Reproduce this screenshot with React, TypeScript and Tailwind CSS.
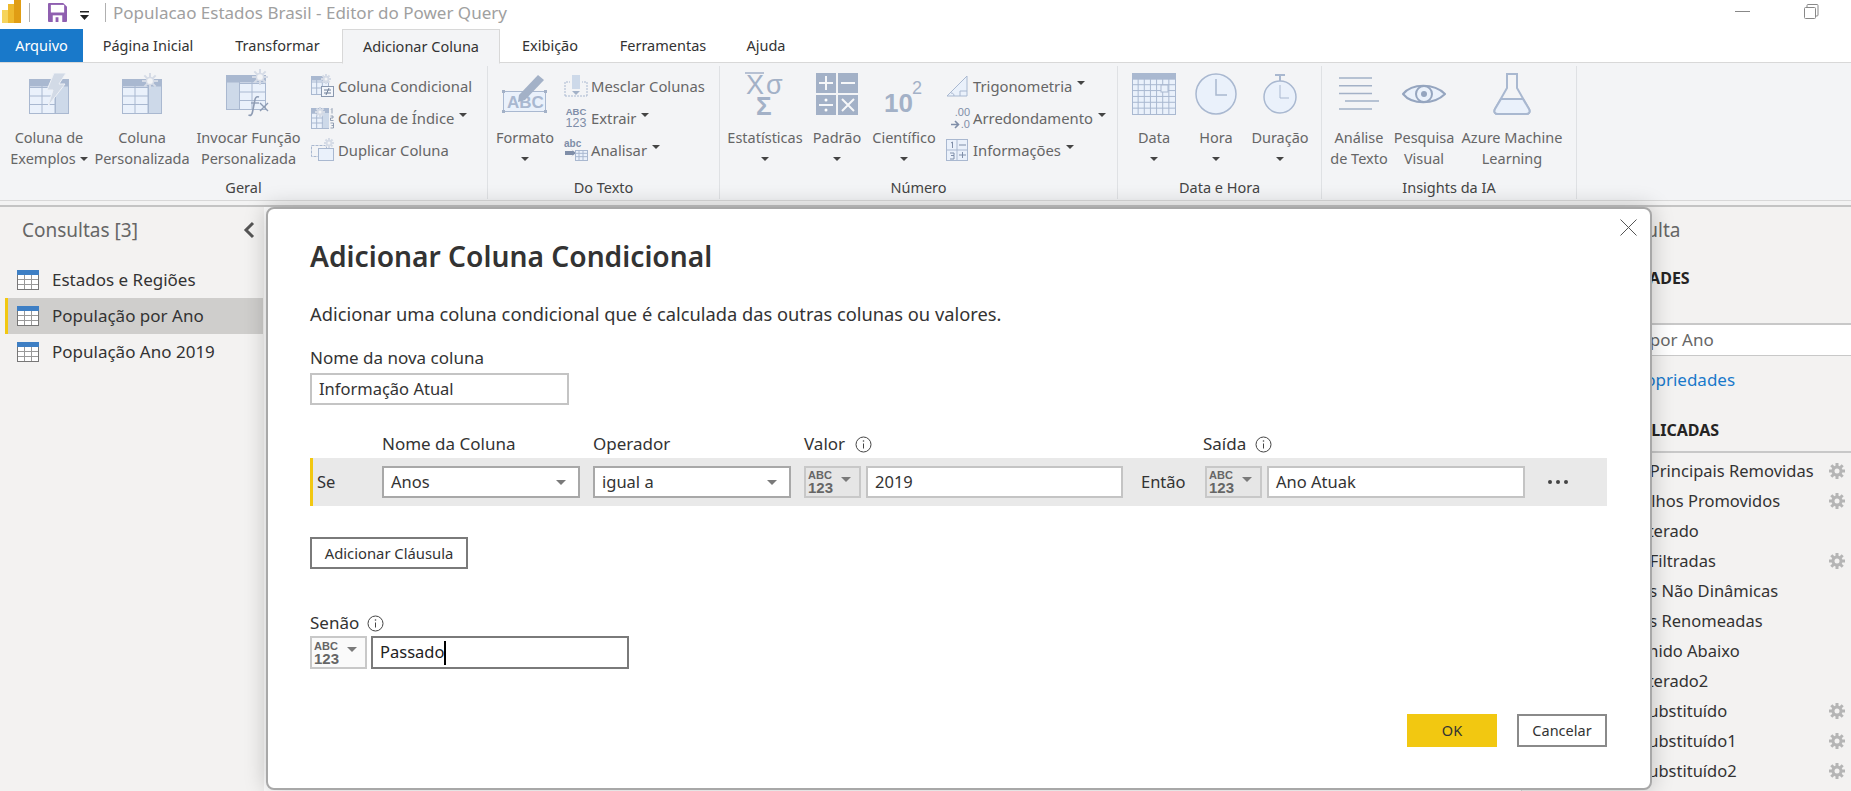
import React from "react";

const HDR = "#a9b8d0";
const MID = "#cdd9e9";
const LITE = "#eaf1fb";
const LINE = "#a9b8d0";
const SUN = "#d5dbe6";

function Grid({ x, y, w, h, cols, rows, fill = LITE }: { x: number; y: number; w: number; h: number; cols: number; rows: number; fill?: string }) {
  const ls = [];
  for (let i = 1; i < cols; i++) ls.push(<line key={"c" + i} x1={x + (w * i) / cols} x2={x + (w * i) / cols} y1={y} y2={y + h} stroke={LINE} />);
  for (let i = 1; i < rows; i++) ls.push(<line key={"r" + i} x1={x} x2={x + w} y1={y + (h * i) / rows} y2={y + (h * i) / rows} stroke={LINE} />);
  return (
    <g>
      <rect x={x + 0.5} y={y + 0.5} width={w} height={h} fill={fill} stroke={LINE} />
      {ls}
    </g>
  );
}

function Sun({ cx, cy, r }: { cx: number; cy: number; r: number }) {
  const rays = [0, 45, 90, 135].map((a) => {
    const t = (a * Math.PI) / 180;
    return <line key={a} x1={cx - r * Math.cos(t)} y1={cy - r * Math.sin(t)} x2={cx + r * Math.cos(t)} y2={cy + r * Math.sin(t)} stroke={SUN} strokeWidth={2} />;
  });
  return (
    <g>
      {rays}
      <circle cx={cx} cy={cy} r={r * 0.45} fill="#f3f4f6" stroke={SUN} strokeWidth={1.5} />
    </g>
  );
}

function IconExamples() {
  return (
    <svg width="41" height="42" viewBox="0 0 41 42">
      <Grid x={0} y={6} w={39} h={34} cols={3} rows={4} />
      <rect x={26.5} y={6.5} width={13} height={34} fill={MID} stroke={LINE} />
      <rect x={0.5} y={6.5} width={39} height={7} fill={HDR} />
      <path d="M25 0h12l-7 11h6L19 33l5-16h-6z" fill="#d2dae6" stroke="#eef1f6" />
    </svg>
  );
}
function IconCustom() {
  return (
    <svg width="41" height="42" viewBox="0 0 41 42">
      <Grid x={0} y={6} w={39} h={34} cols={3} rows={4} />
      <rect x={26.5} y={6.5} width={13} height={34} fill={MID} stroke={LINE} />
      <rect x={0.5} y={6.5} width={39} height={7} fill={HDR} />
      <Sun cx={28} cy={8} r={8} />
    </svg>
  );
}
function IconInvoke() {
  return (
    <svg width="46" height="49" viewBox="0 0 46 49">
      <Grid x={0} y={6} w={39} h={34} cols={3} rows={4} />
      <rect x={0.5} y={6.5} width={13} height={34} fill={MID} stroke={LINE} />
      <rect x={0.5} y={6.5} width={39} height={7} fill={HDR} />
      <Sun cx={34} cy={8} r={8} />
      <path d="M33 28c-3-1-4 1-4.500 5l-2 10c-.5 3-2 4-4 3" fill="none" stroke="#8d9bb3" strokeWidth={1.6} />
      <line x1={25} y1={34} x2={33} y2={34} stroke="#8d9bb3" strokeWidth={1.3} />
      <path d="M34 34l8 8M42 34l-8 8" stroke="#8d9bb3" strokeWidth={1.4} />
    </svg>
  );
}
function SmallCond() {
  return (
    <svg width="24" height="24" viewBox="0 0 24 24">
      <Grid x={0} y={2} w={17} h={18} cols={3} rows={3} />
      <rect x={0.5} y={2.5} width={17} height={4} fill={HDR} />
      <Sun cx={15} cy={5} r={5} />
      <rect x={10.5} y={12.5} width={12} height={10} fill="#f3f6fb" stroke="#8997ae" />
      <path d="M13 16h7M13 19h7M18 14l-3 7" stroke="#6f7f98" fill="none" />
    </svg>
  );
}
function SmallIndex() {
  return (
    <svg width="24" height="24" viewBox="0 0 24 24">
      <Grid x={0} y={2} w={17} h={20} cols={3} rows={4} />
      <rect x={0.5} y={2.5} width={17} height={5} fill={HDR} />
      <rect x={12} y={7} width={6} height={15} fill={MID} />
      <Sun cx={9} cy={6} r={5} />
      <path d="M20 3.500l1-1v5M19.500 10h2.500v2h-2.500v2.500h3M19.500 17h3v5h-3M20.500 19.500h2" fill="none" stroke="#7a8aa3" strokeWidth={0.8} />
    </svg>
  );
}
function SmallDup() {
  return (
    <svg width="24" height="24" viewBox="0 0 24 24">
      <rect x={0.5} y={7.5} width={15} height={11} fill="none" stroke={LINE} strokeDasharray="3 1" />
      <rect x={7.5} y={10.5} width={15} height={12} fill={LITE} stroke={LINE} />
      <Sun cx={18} cy={5} r={5} />
    </svg>
  );
}
function IconFormat() {
  return (
    <svg width="46" height="40" viewBox="0 0 46 40">
      <rect x={1.5} y={17.5} width={42} height={20} fill={LITE} stroke={LINE} />
      {[[0, 16], [42, 16], [0, 36], [42, 36]].map(([x, y]) => (
        <rect key={x + "-" + y} x={x} y={y} width={3} height={3} fill="#a3b1c7" />
      ))}
      <text x={5} y={34} fontSize="17" fontWeight={700} fill={HDR} fontFamily="Liberation Sans">ABC</text>
      <path d="M17 21L36 1l6 5-19 20-7 2z" fill="#a3b1c7" />
    </svg>
  );
}
function SmallMerge() {
  return (
    <svg width="24" height="24" viewBox="0 0 24 24">
      <path d="M1 22V8h5M23 22V8h-5M1 22h22" fill="none" stroke={LINE} strokeDasharray="2 1" />
      <rect x={8} y={1} width={8} height={14} fill={MID} />
      <path d="M8 17l4 4 4-4z" fill="#a3b1c7" />
    </svg>
  );
}
function SmallExtract() {
  return (
    <div className="w-[24px] h-[24px] flex flex-col items-center text-[#7f8ea8] font-['Liberation_Sans']">
      <span className="text-[9.5px] leading-[11px] font-bold">ABC</span>
      <span className="text-[12.5px] leading-[13px]">123</span>
    </div>
  );
}
function SmallParse() {
  return (
    <div className="relative w-[24px] h-[24px] text-[#7f8ea8] font-['Liberation_Sans']">
      <span className="block text-[10px] leading-[11px] font-bold">abc</span>
      <svg width="24" height="13" viewBox="0 0 24 13" className="block">
        <path d="M1 2h8l-2-2 5 4-5 4 2-2H1z" fill="#7f8ea8" />
        <Grid x={11} y={1} w={12} h={10} cols={3} rows={3} />
      </svg>
    </div>
  );
}
function IconStats() {
  return (
    <svg width="40" height="54" viewBox="0 -6 40 54">
      <text x={1} y={21} fontSize="27" fill="#a3b1c7" fontFamily="Liberation Sans">X</text>
      <text x={21} y={21} fontSize="27" fill="#a3b1c7" fontFamily="Liberation Sans">σ</text>
      <line x1={0} x2={19} y1={0} y2={0} stroke="#a3b1c7" strokeWidth={1.5} />
      <text x={11} y={42} fontSize="26" fontWeight={700} fill="#a3b1c7" fontFamily="Liberation Sans">Σ</text>
    </svg>
  );
}
function IconCalc() {
  return (
    <svg width="42" height="42" viewBox="0 0 42 42">
      <rect x={0} y={0} width={20} height={20} fill="#a3b1c7" />
      <rect x={22} y={0} width={20} height={20} fill="#a3b1c7" />
      <rect x={0} y={22} width={20} height={20} fill="#a3b1c7" />
      <rect x={22} y={22} width={20} height={20} fill="#a3b1c7" />
      <path d="M3 10h14M10 3v14M25 10h14M3 32h14M26 26l12 12M38 26L26 38" stroke="#fff" strokeWidth={2} opacity={0.9} />
      <circle cx={10} cy={27} r={1.5} fill="#fff" />
      <circle cx={10} cy={37} r={1.5} fill="#fff" />
    </svg>
  );
}
function IconSci() {
  return (
    <svg width="40" height="46" viewBox="0 -8 40 46">
      <text x={0} y={33} fontSize="26" fontWeight={700} fill="#a3b1c7" fontFamily="Liberation Sans">10</text>
      <text x={28} y={15} fontSize="18" fontWeight={400} fill="#a3b1c7" fontFamily="Liberation Sans">2</text>
    </svg>
  );
}
function SmallTrig() {
  return (
    <svg width="24" height="24" viewBox="0 0 24 24">
      <path d="M1 22L21 2v20z" fill={LITE} stroke={LINE} />
      <path d="M14 22v-5h7M8 22c0-2-1-3-3-3" fill="none" stroke={LINE} />
    </svg>
  );
}
function SmallRound() {
  return (
    <div className="w-[24px] h-[24px] flex flex-col items-end text-[#7f8ea8] font-['Liberation_Sans'] text-[11px] relative">
      <span className="leading-[12px]">.00</span>
      <span className="leading-[12px] flex items-center gap-[1px]">
        <svg width="9" height="9" viewBox="0 0 9 9">
          <path d="M0 4.500h7M4 1l3.500 3.500L4 8" fill="none" stroke="#7f8ea8" strokeWidth={1.6} />
        </svg>
        .0
      </span>
    </div>
  );
}
function SmallInfo() {
  return (
    <svg width="24" height="24" viewBox="0 0 24 24">
      <rect x={0.5} y={1.5} width={21} height={21} fill={LITE} stroke={LINE} />
      <path d="M11 2v20M1 12h20" stroke={LINE} />
      <path d="M5 5l1.500-1v6M4 15h4v2.500H5M8 17.500V21H4" fill="none" stroke="#7f8ea8" />
      <path d="M13 7h7M13 17h7M16.500 14v6" stroke="#7f8ea8" />
    </svg>
  );
}
function IconCal() {
  return (
    <svg width="44" height="42" viewBox="0 0 44 42">
      <Grid x={0} y={0} w={43} h={41} cols={7} rows={7} />
      <rect x={0.5} y={0.5} width={43} height={6} fill={HDR} />
      <rect x={29} y={12} width={7} height={7} fill={LITE} stroke={HDR} />
    </svg>
  );
}
function IconClock() {
  return (
    <svg width="42" height="42" viewBox="0 0 42 42">
      <circle cx={21} cy={21} r={20} fill={LITE} stroke={LINE} strokeWidth={1.5} />
      <path d="M21 6v16h11" fill="none" stroke={LINE} strokeWidth={1.5} />
    </svg>
  );
}
function IconTimer() {
  return (
    <svg width="34" height="40" viewBox="0 0 34 40">
      <path d="M12 1h10M17 1v6" stroke={LINE} strokeWidth={2} />
      <circle cx={17} cy={23} r={16} fill={LITE} stroke={LINE} strokeWidth={1.5} />
      <path d="M17 11v13h9" fill="none" stroke={LINE} />
    </svg>
  );
}
function IconText() {
  return (
    <svg width="40" height="33" viewBox="0 0 40 33">
      <path d="M0 1h33M0 8.700h33M0 16.400h33M6 24.100h34M0 32h33" stroke="#a3b1c7" strokeWidth={1.5} />
    </svg>
  );
}
function IconEye() {
  return (
    <svg width="44" height="26" viewBox="0 0 44 26">
      <path d="M1 13C10 2 32 2 43 13 32 24 10 24 1 13z" fill={LITE} stroke="#95a5bf" strokeWidth={2} />
      <circle cx={22} cy={13} r={8} fill={LITE} stroke="#95a5bf" strokeWidth={2} />
      <circle cx={22} cy={13} r={3} fill="#95a5bf" />
    </svg>
  );
}
function IconFlask() {
  return (
    <svg width="38" height="42" viewBox="0 0 38 42">
      <path d="M14 1h10v14l12 21c1.500 3 0 5-3 5H5c-3 0-4.500-2-3-5l12-21z" fill="#f3f4f6" stroke={LINE} strokeWidth={2} />
      <path d="M8 26h22l6 10c1.500 3 0 5-3 5H5c-3 0-4.500-2-3-5z" fill={LITE} stroke={LINE} strokeWidth={2} />
    </svg>
  );
}

function Caret({ className = "" }: { className?: string }) {
  return <span className={"inline-block w-0 h-0 border-l-[4px] border-r-[4px] border-t-[4px] border-l-transparent border-r-transparent border-t-[#444444] " + className} />;
}

function BigBtn({ w, icon, lines, caret, inline }: { w: string; icon: React.ReactNode; lines: string[]; caret?: boolean; inline?: boolean }) {
  return (
    <div className={"flex flex-col items-center shrink-0 " + w}>
      <div className="h-[61px] pb-[6px] flex items-center justify-center">{icon}</div>
      {lines.map((l, i) => (
        <div key={l} className="h-[21px] leading-[21px] whitespace-nowrap">
          {l}
          {inline && i === lines.length - 1 ? <Caret className="ml-1 mb-[3px]" /> : null}
        </div>
      ))}
      {caret ? (
        <div className="h-[21px] flex items-center">
          <Caret />
        </div>
      ) : null}
    </div>
  );
}

function SmallBtn({ icon, label, caret }: { icon: React.ReactNode; label: string; caret?: boolean }) {
  return (
    <div className="h-[32px] flex items-center gap-[3px] whitespace-nowrap text-[14.8px]">
      <span className="w-[24px] h-[24px] flex items-center justify-center">{icon}</span>
      <span>{label}</span>
      {caret ? <Caret className="ml-[2px] mb-[6px]" /> : null}
    </div>
  );
}

function Group({ w, label, children }: { w: string; label: string; children: React.ReactNode }) {
  return (
    <div className={"flex flex-col shrink-0 h-[133px] mt-[3px] border-r border-[#dfe1e4] " + w}>
      <div className="flex h-[110px]">{children}</div>
      <div className="text-center text-[#444444] h-[23px] leading-[22px]">{label}</div>
    </div>
  );
}

function TableIcon() {
  return (
    <svg width="22" height="20" viewBox="0 0 22 20" className="shrink-0">
      <rect x={0.5} y={1.5} width={21} height={18} fill="#fff" stroke="#777" />
      <path d="M7.500 5v14M14.500 5v14M1 9.500h20M1 14.500h20" stroke="#999" />
      <rect x={0} y={0} width={22} height={5} fill="#3e7fc4" />
    </svg>
  );
}

function Gear() {
  return (
    <svg width="16" height="16" viewBox="0 0 16 16">
      <g stroke="#b5b5b5" strokeWidth={3}>
        <path d="M8 0v16M0 8h16M2.300 2.300l11.400 11.400M13.700 2.300L2.300 13.700" />
      </g>
      <circle cx={8} cy={8} r={5.5} fill="#b5b5b5" />
      <circle cx={8} cy={8} r={2.5} fill="#f3f2f1" />
    </svg>
  );
}

function Info() {
  return (
    <svg width="17" height="17" viewBox="0 0 17 17" className="shrink-0">
      <circle cx={8.5} cy={8.5} r={7.5} fill="none" stroke="#444" />
      <path d="M8.500 7.500v5" stroke="#444" />
      <circle cx={8.5} cy={5} r={0.8} fill="#444" />
    </svg>
  );
}

function TypePicker({ light }: { light?: boolean }) {
  return (
    <div className={"w-[57px] shrink-0 border-2 border-[#c8c8c8] flex items-center gap-[8px] pl-[2px] " + (light ? "h-[33px] bg-[#fafafa]" : "h-[32px] bg-[#e6e6e6]")}>
      <div className="flex flex-col text-[#666666] font-bold leading-none font-['Liberation_Sans']">
        <span className="text-[11px] leading-[11px]">ABC</span>
        <span className="text-[15px] leading-[13px]">123</span>
      </div>
      <span className="w-0 h-0 border-l-[5px] border-r-[5px] border-t-[5px] border-l-transparent border-r-transparent border-t-[#7a7a7a] mb-[6px]" />
    </div>
  );
}

function Sel({ text, w }: { text: string; w: string }) {
  return (
    <div className={"h-[32px] border-2 border-[#a8a8a8] bg-white flex items-center justify-between pl-[7px] pr-[12px] shrink-0 " + w}>
      <span>{text}</span>
      <span className="w-0 h-0 border-l-[5px] border-r-[5px] border-t-[5px] border-l-transparent border-r-transparent border-t-[#7a7a7a]" />
    </div>
  );
}

function Inp({ text, w, dark, caret }: { text: string; w: string; dark?: boolean; caret?: boolean }) {
  return (
    <div className={"border-2 bg-white flex items-center pl-[7px] shrink-0 " + w + " " + (dark ? "h-[33px] border-[#7a7a7a] text-[#222222]" : "h-[32px] border-[#c4c4c4]")}>
      <span>{text}</span>
      {caret ? <span className="w-[1.5px] h-[24px] bg-black" /> : null}
    </div>
  );
}

const steps: [string, boolean][] = [
  ["Linhas Principais Removidas", true],
  ["Cabeçalhos Promovidos", true],
  ["Tipo Alterado", false],
  ["Linhas Filtradas", true],
  ["Colunas Não Dinâmicas", false],
  ["Colunas Renomeadas", false],
  ["Preenchido Abaixo", false],
  ["Tipo Alterado2", false],
  ["Valor Substituído", true],
  ["Valor Substituído1", true],
  ["Valor Substituído2", true],
];

export default function App() {
  const tabs = ["Página Inicial", "Transformar"];
  return (
    <div className="relative w-[1851px] h-[791px] overflow-hidden bg-white text-[#333333] font-['Noto_Sans','Open_Sans',sans-serif] text-[14px]">
      {/* title bar */}
      <div className="h-[29px] flex items-start relative">
        <svg width="20" height="23" viewBox="0 0 20 23" className="ml-[2px]">
          <rect x={0} y={10} width={6} height={13} fill="#f6d45c" />
          <rect x={6} y={4} width={6} height={19} fill="#eeb92d" />
          <rect x={12} y={0} width={7} height={23} fill="#e09d14" />
        </svg>
        <span className="w-px h-[19px] bg-[#b0b0b0] ml-[7px] mt-[3px]" />
        <svg width="19" height="19" viewBox="0 0 20 20" className="ml-[18px] mt-[3px]">
          <path d="M1 0h15l4 4v15a1 1 0 0 1-1 1H1a1 1 0 0 1-1-1V1a1 1 0 0 1 1-1z" fill="#8f5fb0" />
          <rect x={3} y={2} width={14} height={8} fill="#fff" />
          <rect x={5} y={13} width={10} height={7} fill="#fff" />
          <rect x={8} y={15} width={3} height={5} fill="#8f5fb0" />
        </svg>
        <svg width="10" height="9" viewBox="0 0 10 9" className="ml-[13px] mt-[11px]">
          <rect x={0} y={0} width={9} height={1.5} fill="#222" />
          <path d="M0 4h9L4.500 9z" fill="#222" />
        </svg>
        <span className="w-px h-[19px] bg-[#b0b0b0] ml-[15px] mt-[3px]" />
        <span className="ml-[7px] text-[#a0a0a0] text-[17px] leading-[26px] whitespace-nowrap">Populacao Estados Brasil - Editor do Power Query</span>
        <span className="absolute left-[1735px] top-[11px] w-[15px] h-px bg-[#888]" />
        <svg width="15" height="15" viewBox="0 0 15 15" className="absolute left-[1804px] top-[4px]">
          <rect x={0.5} y={3.5} width={11} height={11} fill="none" stroke="#888" rx={1} />
          <path d="M3 3V1.500a1 1 0 0 1 1-1h9a1 1 0 0 1 1 1V11a1 1 0 0 1-1 1h-1" fill="none" stroke="#888" />
        </svg>
      </div>

      {/* tabs */}
      <div className="h-[34px] flex items-stretch text-[14.5px] text-[#333333] border-b border-[#d8d8d8]">
        <div className="w-[83px] bg-[#1979ca] text-white flex items-center justify-center">Arquivo</div>
        {tabs.map((t, i) => (
          <div key={t} className={"flex items-center justify-center " + (i === 0 ? "w-[130px]" : "w-[129px]")}>{t}</div>
        ))}
        <div className="w-[158px] bg-[#f3f4f6] border border-[#d8d8d8] border-b-[#f3f4f6] flex items-center justify-center h-[35px]">Adicionar Coluna</div>
        <div className="w-[100px] flex items-center justify-center">Exibição</div>
        <div className="w-[126px] flex items-center justify-center">Ferramentas</div>
        <div className="w-[80px] flex items-center justify-center">Ajuda</div>
      </div>

      {/* ribbon */}
      <div className="h-[138px] bg-[#f3f4f6] flex text-[14.5px] text-[#666666] border-b border-[#d8d8d8]">
        <Group w="w-[488px]" label="Geral">
          <BigBtn w="w-[98px]" icon={<IconExamples />} lines={["Coluna de", "Exemplos"]} inline />
          <BigBtn w="w-[88px]" icon={<IconCustom />} lines={["Coluna", "Personalizada"]} />
          <BigBtn w="w-[125px]" icon={<IconInvoke />} lines={["Invocar Função", "Personalizada"]} />
          <div className="flex flex-col pt-[4px]">
            <SmallBtn icon={<SmallCond />} label="Coluna Condicional" />
            <SmallBtn icon={<SmallIndex />} label="Coluna de Índice" caret />
            <SmallBtn icon={<SmallDup />} label="Duplicar Coluna" />
          </div>
        </Group>
        <Group w="w-[232px]" label="Do Texto">
          <BigBtn w="w-[74px]" icon={<IconFormat />} lines={["Formato"]} caret />
          <div className="flex flex-col pt-[4px] ml-[2px]">
            <SmallBtn icon={<SmallMerge />} label="Mesclar Colunas" />
            <SmallBtn icon={<SmallExtract />} label="Extrair" caret />
            <SmallBtn icon={<SmallParse />} label="Analisar" caret />
          </div>
        </Group>
        <Group w="w-[398px]" label="Número">
          <BigBtn w="w-[90px]" icon={<IconStats />} lines={["Estatísticas"]} caret />
          <BigBtn w="w-[54px]" icon={<IconCalc />} lines={["Padrão"]} caret />
          <BigBtn w="w-[80px]" icon={<IconSci />} lines={["Científico"]} caret />
          <div className="flex flex-col pt-[4px] ml-[2px]">
            <SmallBtn icon={<SmallTrig />} label="Trigonometria" caret />
            <SmallBtn icon={<SmallRound />} label="Arredondamento" caret />
            <SmallBtn icon={<SmallInfo />} label="Informações" caret />
          </div>
        </Group>
        <Group w="w-[204px]" label="Data e Hora">
          <BigBtn w="w-[72px]" icon={<IconCal />} lines={["Data"]} caret />
          <BigBtn w="w-[52px]" icon={<IconClock />} lines={["Hora"]} caret />
          <BigBtn w="w-[76px]" icon={<IconTimer />} lines={["Duração"]} caret />
        </Group>
        <Group w="w-[255px]" label="Insights da IA">
          <BigBtn w="w-[74px]" icon={<IconText />} lines={["Análise", "de Texto"]} />
          <BigBtn w="w-[56px]" icon={<IconEye />} lines={["Pesquisa", "Visual"]} />
          <BigBtn w="w-[120px]" icon={<IconFlask />} lines={["Azure Machine", "Learning"]} />
        </Group>
      </div>
      <div className="h-[6px] bg-[#f3f3f3] border-b-2 border-[#c4c4c4]" />

      {/* body */}
      <div className="flex h-[584px]">
        <div className="w-[264px] bg-[#f3f2f1] shrink-0 text-[17px]">
          <div className="h-[46px] pl-[22px] flex items-center justify-between pr-[9px] text-[19px] text-[#666666]">
            <span>Consultas [3]</span>
            <svg width="12" height="18" viewBox="0 0 12 18">
              <path d="M10 2L3 9l7 7" fill="none" stroke="#555" strokeWidth={3} />
            </svg>
          </div>
          <div className="flex flex-col mt-[9px]">
            {["Estados e Regiões", "População por Ano", "População Ano 2019"].map((q, i) => (
              <div key={q} className={"h-[36px] ml-[5px] mr-[1px] flex items-center gap-[13px] pl-[9px] border-l-[3px] " + (i === 1 ? "bg-[#cfcecc] border-[#f2c811]" : "border-transparent")}>
                <TableIcon />
                <span>{q}</span>
              </div>
            ))}
          </div>
        </div>
        <div className="flex-1 bg-white" />
        <div className="w-[330px] shrink-0 bg-[#f3f2f1] border-l border-[#d8d8d8] text-[16.5px] text-[#333333]">
          <div className="h-[46px] pl-[80px] flex items-center text-[19px] text-[#666666]">Consulta</div>
          <div className="mt-[10px] pl-[47px] h-[30px] flex items-center font-bold text-[16px] text-[#252423]">PROPRIEDADES</div>
          <div className="mt-[30px] h-[33px] bg-white border-t-2 border-b border-[#c8c8c8] pl-[40px] flex items-center text-[#666666] text-[17px]">População por Ano</div>
          <div className="mt-[9px] pl-[33px] h-[30px] flex items-center text-[#1979ca] text-[17px]">Todas as Propriedades</div>
          <div className="mt-[20px] pl-[47px] h-[30px] flex items-center font-bold text-[16px] text-[#252423]">ETAPAS APLICADAS</div>
          <div className="mt-[6px] border-t-2 border-[#c8c8c8] pt-[3px]">
            {steps.map(([s, g]) => (
              <div key={s} className="h-[30px] flex items-center justify-between pl-[73px] pr-[6px]">
                <span>{s}</span>
                {g ? <Gear /> : null}
              </div>
            ))}
          </div>
        </div>
      </div>

      {/* dialog */}
      <div className="absolute left-[266px] top-[207px] w-[1386px] h-[583px] bg-white border-2 border-[#a8a8a8] rounded-[8px] shadow-[0_0_22px_rgba(0,0,0,0.22)] text-[#333333] text-[16.5px]">
        <button className="absolute right-[13px] top-[10px] text-[#555]">
          <svg width="17" height="17" viewBox="0 0 17 17" className="block">
            <path d="M0.500 0.500l16 16M16.500 0.500l-16 16" stroke="#555" strokeWidth={1} />
          </svg>
        </button>
        <div className="pl-[42px] pt-[29px]">
          <div className="text-[28.2px] font-semibold leading-[36px] text-[#333333]">Adicionar Coluna Condicional</div>
          <div className="mt-[28px] leading-[24px] text-[18.3px]">Adicionar uma coluna condicional que é calculada das outras colunas ou valores.</div>
          <div className="mt-[20px] leading-[24px] text-[17px]">Nome da nova coluna</div>
          <div className="mt-[3px] mb-[27px]">
            <div className="h-[32px] w-[259px] border-2 border-[#c4c4c4] flex items-center pl-[7px]">Informação Atual</div>
          </div>
        </div>
        <div className="ml-[42px] w-[1297px]">
          <div className="flex h-[24px] items-center text-[17px]">
            <span className="ml-[72px] w-[211px]">Nome da Coluna</span>
            <span className="w-[211px]">Operador</span>
            <span className="w-[399px] flex items-center gap-[10px]">Valor <Info /></span>
            <span className="flex items-center gap-[9px]">Saída <Info /></span>
          </div>
          <div className="mt-[2px] h-[48px] bg-[#e9e9e9] border-l-[3px] border-[#f2c811] flex items-center">
            <span className="ml-[4px] w-[65px]">Se</span>
            <Sel text="Anos" w="w-[198px]" />
            <Sel text="igual a" w="w-[198px] ml-[13px]" />
            <div className="ml-[13px]"><TypePicker /></div>
            <div className="ml-[5px]"><Inp text="2019" w="w-[257px]" /></div>
            <span className="ml-[18px] w-[64px]">Então</span>
            <TypePicker />
            <div className="ml-[5px]"><Inp text="Ano Atuak" w="w-[258px]" /></div>
            <span className="ml-[23px] flex gap-[4px]">
              <span className="w-[4px] h-[4px] rounded-full bg-[#444444]" />
              <span className="w-[4px] h-[4px] rounded-full bg-[#444444]" />
              <span className="w-[4px] h-[4px] rounded-full bg-[#444444]" />
            </span>
          </div>
          <button className="mt-[31px] block h-[32px] w-[158px] border-2 border-[#7a7a7a] text-[14.8px]">Adicionar Cláusula</button>
          <div className="mt-[42px] h-[24px] flex items-center gap-[8px] text-[17px]">Senão <Info /></div>
          <div className="mt-[1px] flex gap-[4px]">
            <TypePicker light />
            <Inp text="Passado" w="w-[258px]" dark caret />
          </div>
        </div>
        <div className="absolute right-[43px] bottom-[41px] flex gap-[20px] text-[14.5px]">
          <button className="w-[90px] h-[33px] bg-[#f2c811]">OK</button>
          <button className="w-[90px] h-[33px] border-2 border-[#8a8a8a]">Cancelar</button>
        </div>
      </div>
    </div>
  );
}
